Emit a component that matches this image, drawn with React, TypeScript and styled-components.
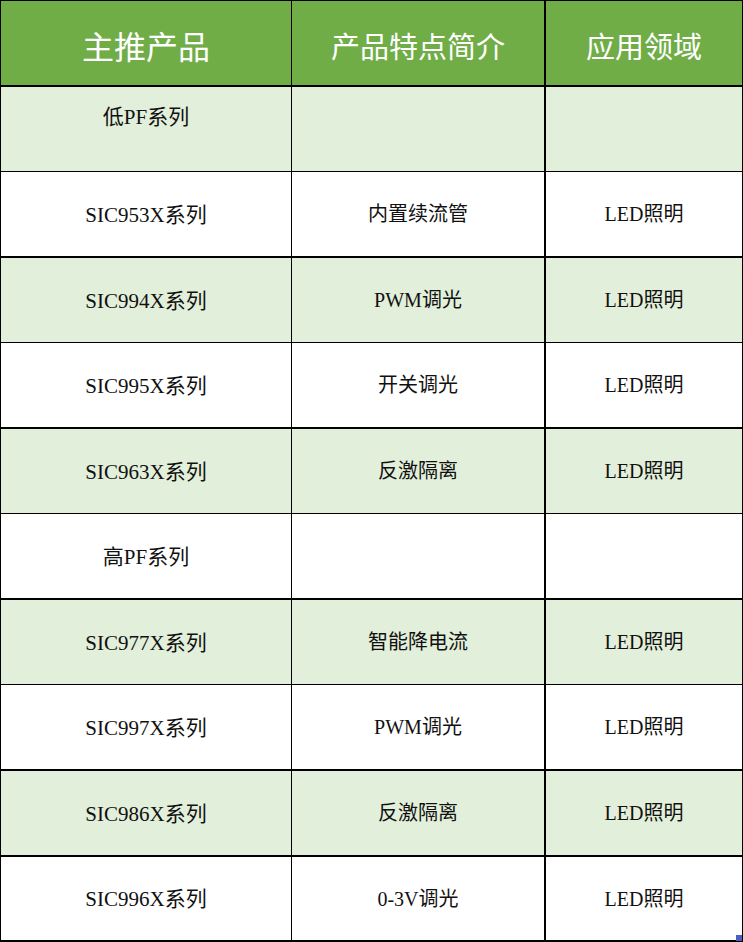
import styled, { createGlobalStyle } from "styled-components";

const GlobalStyle = createGlobalStyle`
    html, body {
        margin: 0;
        padding: 0;
        background: #fff;
    }
    body {
        font-family: "Liberation Serif", "Noto Sans CJK SC", serif;
    }
`;

const Sheet = styled.div`
    position: relative;
    width: 743px;
    height: 942px;
    overflow: hidden;
`;

const Row = styled.div<{ $h: number; $bg: string; $bottom: number; $top?: number }>`
    display: grid;
    grid-template-columns: 292px 254px 197px;
    height: ${(p) => p.$h}px;
    box-sizing: border-box;
    background: ${(p) => p.$bg};
    border-top: ${(p) => p.$top || 0}px solid #000;
    border-bottom: ${(p) => p.$bottom}px solid #000;
`;

const Cell = styled.div<{ $right: number; $left?: number; $alignTop?: boolean; $size?: number }>`
    display: flex;
    justify-content: center;
    align-items: ${(p) => (p.$alignTop ? "flex-start" : "center")};
    padding-top: ${(p) => (p.$alignTop ? "13px" : "0")};
    padding-bottom: 3px;
    box-sizing: border-box;
    border-right: ${(p) => p.$right}px solid #000;
    border-left: ${(p) => p.$left || 0}px solid #000;
    font-size: ${(p) => p.$size || 20}px;
    color: #111;
    white-space: nowrap;
`;

const HeadCell = styled(Cell)`
    font-size: ${(p) => p.$size || 29}px;
    color: #fff;
    padding-top: 4px;
    padding-bottom: 0;
`;

const Handle = styled.div`
    position: absolute;
    right: 1px;
    bottom: 1px;
    width: 6px;
    height: 6px;
    background: #4a5fc1;
`;

const rows = [
    { name: "低PF系列", feat: "", area: "", h: 85, b: 1, top: true },
    { name: "SIC953X系列", feat: "内置续流管", area: "LED照明", h: 86, b: 2 },
    { name: "SIC994X系列", feat: "PWM调光", area: "LED照明", h: 85, b: 1 },
    { name: "SIC995X系列", feat: "开关调光", area: "LED照明", h: 86, b: 2 },
    { name: "SIC963X系列", feat: "反激隔离", area: "LED照明", h: 85, b: 1 },
    { name: "高PF系列", feat: "", area: "", h: 86, b: 2 },
    { name: "SIC977X系列", feat: "智能降电流", area: "LED照明", h: 85, b: 1 },
    { name: "SIC997X系列", feat: "PWM调光", area: "LED照明", h: 86, b: 2 },
    { name: "SIC986X系列", feat: "反激隔离", area: "LED照明", h: 86, b: 2 },
    { name: "SIC996X系列", feat: "0-3V调光", area: "LED照明", h: 85, b: 2 },
];

const App = () => {
    return (
        <>
            <GlobalStyle />
            <Sheet>
                <Row $h={87} $bg="#70ad47" $top={1} $bottom={2}>
                    <HeadCell $left={1} $right={1} $size={32}>主推产品</HeadCell>
                    <HeadCell $right={2}>产品特点简介</HeadCell>
                    <HeadCell $right={1}>应用领域</HeadCell>
                </Row>
                {rows.map((r, i) => (
                    <Row key={r.name} $h={r.h} $bg={i % 2 === 0 ? "#e2efda" : "#fff"} $bottom={r.b}>
                        <Cell $left={1} $right={1} $alignTop={r.top} $size={21}>{r.name}</Cell>
                        <Cell $right={2}>{r.feat}</Cell>
                        <Cell $right={1}>{r.area}</Cell>
                    </Row>
                ))}
                <Handle />
            </Sheet>
        </>
    );
};

export default App;
